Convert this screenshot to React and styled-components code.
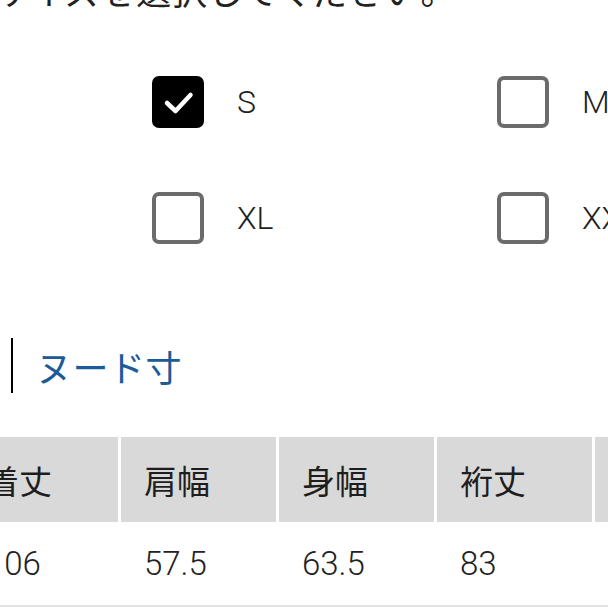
import styled, { createGlobalStyle } from "styled-components";

const GlobalStyle = createGlobalStyle`
  html, body {
    margin: 0;
    padding: 0;
    background: #fff;
  }
  body {
    font-family: Roboto, "Noto Sans CJK JP", sans-serif;
    color: #222;
  }
`;

const sizes = [
  { label: "S", checked: true },
  { label: "M", checked: false },
  { label: "XL", checked: false },
  { label: "XXL", checked: false },
];

const headers = ["着丈", "肩幅", "身幅", "裄丈", "袖丈"];
const values = ["106", "57.5", "63.5", "83", "60"];

const Check = () => (
  <svg width="52" height="52" viewBox="0 0 52 52">
    <path
      d="M15 27 L23.5 35 L38.5 19"
      fill="none"
      stroke="#fff"
      strokeWidth="4.5"
      strokeLinecap="round"
      strokeLinejoin="round"
    />
  </svg>
);

const App = () => {
  return (
    <Screen>
      <GlobalStyle />
      <Prompt>サイズを選択してください。</Prompt>

      <SizeGrid>
        {sizes.map((s) => (
          <SizeOption key={s.label}>
            <Box $checked={s.checked}>{s.checked && <Check />}</Box>
            <SizeLabel>{s.label}</SizeLabel>
          </SizeOption>
        ))}
      </SizeGrid>

      <SectionTitle>ヌード寸</SectionTitle>

      <Table>
        {headers.map((h) => (
          <HeadCell key={h}>{h}</HeadCell>
        ))}
        {values.map((v, i) => (
          <DataCell key={i}>{v}</DataCell>
        ))}
      </Table>
    </Screen>
  );
};

const Screen = styled.div`
  width: 608px;
  height: 608px;
  overflow: hidden;
  position: relative;
`;

const Prompt = styled.div`
  margin: -24px 0 0 -6px;
  font-size: 35px;
  line-height: 35px;
  letter-spacing: 0.8px;
  white-space: nowrap;
  color: #222;
`;

const SizeGrid = styled.div`
  display: grid;
  grid-template-columns: 345px 345px;
  row-gap: 64px;
  margin: 65px 0 0 152px;
`;

const SizeOption = styled.div`
  display: flex;
  align-items: center;
  gap: 33px;
  height: 52px;
`;

const Box = styled.div`
  box-sizing: border-box;
  width: 52px;
  height: 52px;
  flex: none;
  border-radius: 7px;
  background: ${({ $checked }) => ($checked ? "#000" : "#fff")};
  border: ${({ $checked }) => ($checked ? "none" : "4px solid #6b6b6b")};
  display: flex;
  align-items: center;
  justify-content: center;
`;

const SizeLabel = styled.span`
  font-size: 32px;
  font-weight: 300;
  color: #222;
  white-space: nowrap;
`;

const SectionTitle = styled.h3`
  margin: 94px 0 0 11px;
  padding-left: 23px;
  border-left: 2px solid #000;
  height: 55px;
  display: flex;
  align-items: center;
  font-size: 36px;
  font-weight: 400;
  color: #1b5c98;
  letter-spacing: 0.5px;
`;

const Table = styled.div`
  display: grid;
  grid-template-columns: repeat(5, 155px);
  grid-template-rows: 85px 83px;
  column-gap: 3px;
  margin: 44px 0 0 -37px;
  width: max-content;
  border-bottom: 2px solid #e2e2e2;
`;

const HeadCell = styled.div`
  background: #d9d9d9;
  display: flex;
  align-items: center;
  padding-left: 23px;
  font-size: 33px;
  color: #1e1e1e;
`;

const DataCell = styled.div`
  display: flex;
  align-items: center;
  padding-left: 23px;
  font-size: 33px;
  font-weight: 300;
  color: #222;
`;

export default App;
